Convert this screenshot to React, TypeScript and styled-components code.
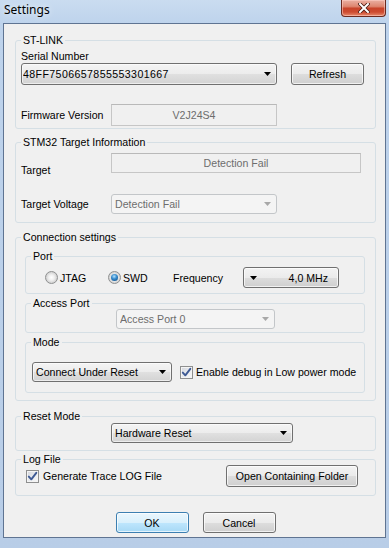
import React from "react";
import styled, { createGlobalStyle } from "styled-components";

const GlobalStyle = createGlobalStyle`
  html, body {
    margin: 0;
    padding: 0;
  }
  body {
    background: #bfd3ea;
    font-family: "Liberation Sans", Arial, sans-serif;
    font-size: 10.6px;
  }
`;

const Window = styled.div`
  width: 389px;
  height: 548px;
  box-sizing: border-box;
  padding: 0 3px 10px;
  display: flex;
  flex-direction: column;
  background: linear-gradient(180deg, #cadcf0 0%, #bed3ec 24px, #b8cde7 100%);
`;

const TitleBar = styled.div`
  height: 23px;
  flex: none;
  display: flex;
  justify-content: space-between;
  align-items: flex-start;
`;

const Caption = styled.div`
  margin: 2px 0 0 1px;
  font-family: "Noto Sans", "Liberation Sans", sans-serif;
  font-size: 12px;
  line-height: 16px;
  color: #000;
  text-shadow: 0 0 6px rgba(255, 255, 255, 0.9);
`;

const CloseButton = styled.div`
  width: 45px;
  height: 17px;
  box-sizing: border-box;
  border: 1px solid #6b2a1f;
  border-top: none;
  border-radius: 0 0 4px 4px;
  background: linear-gradient(
    180deg,
    #eab0a2 0%,
    #de8670 40%,
    #c8442a 52%,
    #cd4b30 75%,
    #e78a6c 100%
  );
  box-shadow: inset 0 0 0 1px rgba(255, 210, 200, 0.55);
  display: flex;
  align-items: center;
  justify-content: center;
`;

const Client = styled.div`
  flex: 1;
  background: #f0f0f0;
  border: 1px solid #5f7492;
  padding: 10px 9px 0 11px;
  display: flex;
  flex-direction: column;
`;

const Group = styled.fieldset<{ $mt?: number }>`
  margin: ${(p) => p.$mt ?? 0}px 0 0;
  padding: 0;
  min-width: 0;
  border: 1px solid #d5dfe5;
  border-radius: 3px;
`;

const Legend = styled.legend`
  margin-left: 5px;
  padding: 0 2px;
  font-size: 10.6px;
  line-height: 12px;
  color: #000;
`;

const GroupBody = styled.div<{ $pad: string }>`
  padding: ${(p) => p.$pad};
  display: flex;
  flex-direction: column;
`;

const Row = styled.div<{ $mt?: number; $align?: string; $justify?: string }>`
  margin-top: ${(p) => p.$mt ?? 0}px;
  display: flex;
  align-items: ${(p) => p.$align ?? "center"};
  justify-content: ${(p) => p.$justify ?? "flex-start"};
`;

const FieldLabel = styled.div<{ $w?: number; $mt?: number }>`
  width: ${(p) => (p.$w ? `${p.$w}px` : "auto")};
  margin-top: ${(p) => p.$mt ?? 0}px;
  flex: none;
  line-height: 12px;
  color: #000;
  white-space: nowrap;
`;

const Combo = styled.div<{
  $w: number;
  $h: number;
  $disabled?: boolean;
  $pad?: number;
  $ml?: number;
}>`
  width: ${(p) => p.$w}px;
  height: ${(p) => p.$h}px;
  margin-left: ${(p) => p.$ml ?? 0}px;
  box-sizing: border-box;
  flex: none;
  display: flex;
  align-items: center;
  padding-left: ${(p) => p.$pad ?? 3}px;
  border: 1px solid ${(p) => (p.$disabled ? "#c3c6c9" : "#707070")};
  border-radius: 3px;
  background: ${(p) =>
    p.$disabled
      ? "#f4f4f4"
      : "linear-gradient(180deg, #f4f4f4 0%, #ececec 50%, #e0e0e0 51%, #d3d3d3 100%)"};
  box-shadow: ${(p) =>
    p.$disabled ? "none" : "inset 0 0 0 1px rgba(255, 255, 255, 0.6)"};
  color: ${(p) => (p.$disabled ? "#6d6d6d" : "#000")};
`;

const ComboText = styled.span<{ $spacing?: number }>`
  flex: 1;
  letter-spacing: ${(p) => p.$spacing ?? 0}px;
  white-space: nowrap;
  overflow: hidden;
`;

const ArrowBox = styled.span`
  width: 17px;
  flex: none;
  display: flex;
  justify-content: center;
  align-items: center;
`;

const TextBox = styled.div<{ $w: number; $h: number }>`
  width: ${(p) => p.$w}px;
  height: ${(p) => p.$h}px;
  box-sizing: border-box;
  flex: none;
  border: 1px solid #c6c6c6;
  border-top-color: #b9b9b9;
  background: #f0f0f0;
  color: #6d6d6d;
  display: flex;
  align-items: center;
  justify-content: center;
`;

const Button = styled.button<{ $w: number; $h: number; $primary?: boolean }>`
  width: ${(p) => p.$w}px;
  height: ${(p) => p.$h}px;
  box-sizing: border-box;
  flex: none;
  margin: 0;
  padding: 0;
  border: 1px solid ${(p) => (p.$primary ? "#3c7fb1" : "#707070")};
  border-radius: 3px;
  background: ${(p) =>
    p.$primary
      ? "linear-gradient(180deg, #eaf6fd 0%, #d9f0fc 50%, #bee6fd 51%, #a7d9f5 100%)"
      : "linear-gradient(180deg, #f3f3f3 0%, #ebebeb 50%, #dddddd 51%, #cfcfcf 100%)"};
  box-shadow: inset 0 0 0 1px rgba(255, 255, 255, 0.7);
  font-family: "Liberation Sans", Arial, sans-serif;
  font-size: 10.6px;
  color: #000;
`;

const FreqButton = styled(Button)`
  display: flex;
  align-items: center;
  justify-content: space-between;
  padding: 0 10px 0 6px;
`;

const Choice = styled.label<{ $w?: number; $gap?: number }>`
  width: ${(p) => (p.$w ? `${p.$w}px` : "auto")};
  flex: none;
  display: flex;
  align-items: center;
  gap: ${(p) => p.$gap ?? 2}px;
  line-height: 12px;
  white-space: nowrap;
`;

const RadioMark = styled.span<{ $checked?: boolean }>`
  width: 13px;
  height: 13px;
  box-sizing: border-box;
  border-radius: 50%;
  border: 1px solid #8f9091;
  background: radial-gradient(
    circle at 50% 50%,
    #ffffff 0%,
    #f0f0f0 35%,
    #cfcfcf 75%,
    #e8e8e8 100%
  );
  display: flex;
  align-items: center;
  justify-content: center;

  &::after {
    content: "";
    width: 7px;
    height: 7px;
    border-radius: 50%;
    display: ${(p) => (p.$checked ? "block" : "none")};
    background: radial-gradient(
      circle at 45% 35%,
      #b7e3fb 0%,
      #3b8fd0 40%,
      #155a96 80%,
      #0d3d6b 100%
    );
  }
`;

const CheckMark = styled.span`
  width: 13px;
  height: 13px;
  box-sizing: border-box;
  flex: none;
  border: 1px solid #8e8f8f;
  background: linear-gradient(135deg, #d2d5dc 0%, #eceef1 60%, #f8f8f8 100%);
  box-shadow: inset 0 0 0 1px #f4f4f4;
  display: flex;
  align-items: center;
  justify-content: center;
`;

const ButtonRow = styled.div`
  margin-top: 16px;
  display: flex;
  justify-content: center;
  gap: 14px;
`;

const Arrow = ({ color = "#000" }: { color?: string }) => (
  <svg width="7" height="4" viewBox="0 0 7 4">
    <path d="M0 0h7L3.5 4z" fill={color} />
  </svg>
);

const Tick = () => (
  <svg width="11" height="11" viewBox="0 0 11 11">
    <path
      d="M1.8 5.6 L4.3 8.3 L9.3 1.8"
      fill="none"
      stroke="#3e5a94"
      strokeWidth="1.9"
      strokeLinecap="round"
      strokeLinejoin="round"
    />
  </svg>
);

const CloseGlyph = () => (
  <svg width="12" height="10" viewBox="0 0 12 10">
    <path
      d="M2 1 L10 9 M10 1 L2 9"
      stroke="#4a1a12"
      strokeWidth="3.6"
      strokeLinecap="square"
    />
    <path
      d="M2 1 L10 9 M10 1 L2 9"
      stroke="#ffffff"
      strokeWidth="2"
      strokeLinecap="square"
    />
  </svg>
);

export default function App() {
  return (
    <>
      <GlobalStyle />
      <Window>
        <TitleBar>
          <Caption>Settings</Caption>
          <CloseButton>
            <CloseGlyph />
          </CloseButton>
        </TitleBar>

        <Client>
          <Group>
            <Legend>ST-LINK</Legend>
            <GroupBody $pad="4px 0 2px 5px">
              <FieldLabel>Serial Number</FieldLabel>
              <Row $mt={1}>
                <Combo $w={256} $h={22} $pad={1}>
                  <ComboText $spacing={0.4}>48FF7506657855553301667</ComboText>
                  <ArrowBox>
                    <Arrow />
                  </ArrowBox>
                </Combo>
                <Button $w={73} $h={22} style={{ marginLeft: 14 }}>
                  Refresh
                </Button>
              </Row>
              <Row $mt={19}>
                <FieldLabel $w={90}>Firmware Version</FieldLabel>
                <TextBox $w={166} $h={22}>
                  V2J24S4
                </TextBox>
              </Row>
            </GroupBody>
          </Group>

          <Group $mt={7}>
            <Legend>STM32 Target Information</Legend>
            <GroupBody $pad="5px 0 8px 5px">
              <Row $align="flex-start">
                <FieldLabel $w={90} $mt={11}>
                  Target
                </FieldLabel>
                <TextBox $w={250} $h={20}>
                  Detection Fail
                </TextBox>
              </Row>
              <Row $mt={18}>
                <FieldLabel $w={90}>Target Voltage</FieldLabel>
                <Combo $w={166} $h={20} $disabled>
                  <ComboText>Detection Fail</ComboText>
                  <ArrowBox>
                    <Arrow color="#a8a8a8" />
                  </ArrowBox>
                </Combo>
              </Row>
            </GroupBody>
          </Group>

          <Group $mt={8}>
            <Legend>Connection settings</Legend>
            <GroupBody $pad="7px 10px 7px 9px">
              <Group>
                <Legend>Port</Legend>
                <GroupBody $pad="5px 0 5px 19px">
                  <Row>
                    <Choice $w={63}>
                      <RadioMark />
                      JTAG
                    </Choice>
                    <Choice $w={65}>
                      <RadioMark $checked />
                      SWD
                    </Choice>
                    <FieldLabel $w={70}>Frequency</FieldLabel>
                    <FreqButton $w={96} $h={21}>
                      <Arrow />
                      <span>4,0 MHz</span>
                    </FreqButton>
                  </Row>
                </GroupBody>
              </Group>

              <Group $mt={3}>
                <Legend>Access Port</Legend>
                <GroupBody $pad="0 0 3px 90px">
                  <Combo $w={159} $h={20} $disabled>
                    <ComboText>Access Port 0</ComboText>
                    <ArrowBox>
                      <Arrow color="#a8a8a8" />
                    </ArrowBox>
                  </Combo>
                </GroupBody>
              </Group>

              <Group $mt={3}>
                <Legend>Mode</Legend>
                <GroupBody $pad="14px 0 10px 6px">
                  <Row>
                    <Combo $w={140} $h={20}>
                      <ComboText>Connect Under Reset</ComboText>
                      <ArrowBox>
                        <Arrow />
                      </ArrowBox>
                    </Combo>
                    <Choice $gap={3} style={{ marginLeft: 8 }}>
                      <CheckMark>
                        <Tick />
                      </CheckMark>
                      Enable debug in Low power mode
                    </Choice>
                  </Row>
                </GroupBody>
              </Group>
            </GroupBody>
          </Group>

          <Group $mt={9}>
            <Legend>Reset Mode</Legend>
            <GroupBody $pad="1px 0 7px 95px">
              <Combo $w={182} $h={20}>
                <ComboText>Hardware Reset</ComboText>
                <ArrowBox>
                  <Arrow />
                </ArrowBox>
              </Combo>
            </GroupBody>
          </Group>

          <Group $mt={2}>
            <Legend>Log File</Legend>
            <GroupBody $pad="0 17px 8px 10px">
              <Row $justify="space-between">
                <Choice $gap={4}>
                  <CheckMark>
                    <Tick />
                  </CheckMark>
                  Generate Trace LOG File
                </Choice>
                <Button $w={132} $h={22}>
                  Open Containing Folder
                </Button>
              </Row>
            </GroupBody>
          </Group>

          <ButtonRow>
            <Button $w={73} $h={21} $primary>
              OK
            </Button>
            <Button $w={73} $h={21}>
              Cancel
            </Button>
          </ButtonRow>
        </Client>
      </Window>
    </>
  );
}
